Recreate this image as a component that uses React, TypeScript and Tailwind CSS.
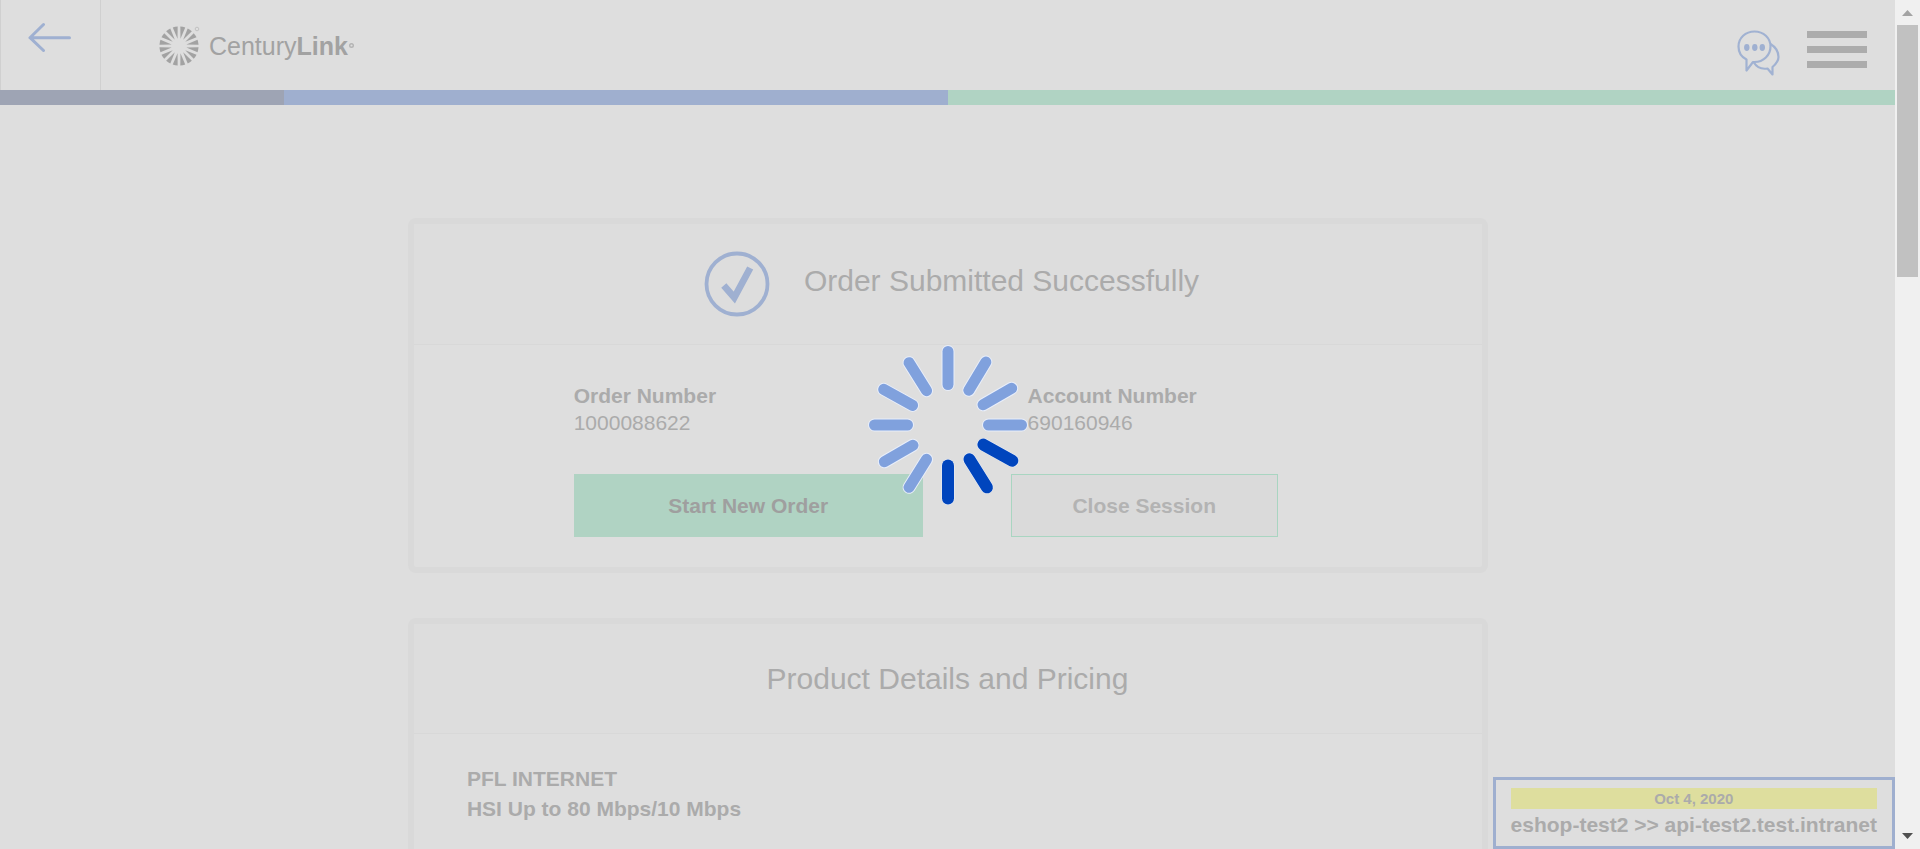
import React from "react";

const WEDGES = Array.from({ length: 16 }, (_, i) => 11.25 + i * 22.5);

const SPOKES = [
  { angle: 0, active: false },
  { angle: 31, active: false },
  { angle: 60, active: false },
  { angle: 90, active: false },
  { angle: 119, active: true },
  { angle: 148, active: true },
  { angle: 180, active: true },
  { angle: 212, active: false },
  { angle: 240, active: false },
  { angle: 270, active: false },
  { angle: 299, active: false },
  { angle: 328, active: false },
];

function Logo() {
  return (
    <a href="#home" aria-label="CenturyLink" className="flex items-center text-[#a2a2a2]">
      <svg width="42" height="42" viewBox="-21 -21 42 42" fill="#a2a2a2">
        {WEDGES.map((a) => (
          <path key={a} d="M0 -7.5 L-2.5 -19.4 A20 20 0 0 1 2.5 -19.4 Z" transform={`rotate(${a})`} />
        ))}
        <circle cx="18" cy="-17" r="1.8" fill="none" stroke="#c2c2c2" strokeWidth="1" />
      </svg>
      <span className="ml-[9px] text-[25px] leading-8">
        Century<b>Link</b>
      </span>
      <svg width="7" height="8" viewBox="0 0 7 8">
        <circle cx="3.5" cy="3.5" r="1.8" fill="none" stroke="#b4b4b4" strokeWidth="1.4" />
      </svg>
    </a>
  );
}

function Header() {
  return (
    <header>
      <div className="flex h-[90px]">
        <button aria-label="Back" className="flex w-[101px] shrink-0 border-x border-[#d0d0d0] pl-[27px] pt-[22px]">
          <svg width="44" height="31" viewBox="0 0 44 31" fill="none" stroke="#9fb0d1" strokeWidth="3" strokeLinecap="round" strokeLinejoin="round">
            <path d="M41.5 15.7H2M15.5 2.5L2 15.7L15.500 28.5" />
          </svg>
        </button>
        <div className="flex flex-1 items-center pl-[57px] pt-px">
          <Logo />
        </div>
        <div className="flex items-start gap-[26px] pr-7 pt-[29px]">
          <button aria-label="Chat">
            <svg width="44" height="48" viewBox="0 0 44 48" fill="none" stroke="#a1b2d2" strokeWidth="2.2" strokeLinejoin="round">
              <path d="M17.5 2.5C26.5 2.5 33.5 9 33.5 17.5S26.5 33 17.5 33H16L9.5 41.5V30.5C4.5 28 1.5 23.5 1.5 17.5C1.5 9 8.5 2.5 17.5 2.5Z" />
              <path d="M33.5 15C38.5 18 41.5 22.5 41.5 28C41.5 32 39 35 35.5 38V45.5L30.5 39.5C24.5 40.5 19.5 38 16.5 33" />
              <g fill="#9fb0d1" stroke="none">
                <ellipse cx="9.8" cy="18.5" rx="2.7" ry="3.4" />
                <ellipse cx="17.8" cy="18.5" rx="2.7" ry="3.4" />
                <ellipse cx="25.3" cy="18.5" rx="2.7" ry="3.4" />
              </g>
            </svg>
          </button>
          <button aria-label="Menu" className="flex w-[60px] flex-col gap-2 pt-0.5">
            <span className="h-[7px] w-full bg-[#acacac]" />
            <span className="h-[7px] w-full bg-[#acacac]" />
            <span className="h-[7px] w-full bg-[#acacac]" />
          </button>
        </div>
      </div>
      <div className="flex h-[15px]">
        <div className="w-[15%] bg-[#9ea4b4]" />
        <div className="w-[35%] bg-[#9fafcf]" />
        <div className="w-1/2 bg-[#b0d3c3]" />
      </div>
    </header>
  );
}

function Card({ children }: { children: React.ReactNode }) {
  return (
    <section className="w-full max-w-[1080px] rounded-lg border-[6px] border-[#d9d9d9]">{children}</section>
  );
}

function Field({ label, value }: { label: string; value: string }) {
  return (
    <div className="w-1/2">
      <dt className="font-bold">{label}</dt>
      <dd>{value}</dd>
    </div>
  );
}

function Spinner() {
  return (
    <div role="status" aria-label="Loading" className="absolute inset-0 flex items-center justify-center">
      <svg width="164" height="164" viewBox="-82 -82 164 164" strokeLinecap="round">
        {SPOKES.map(({ angle, active }) => (
          <g key={angle} transform={`rotate(${angle})`}>
            <line x1="0" y1="-73.5" x2="0" y2="-40.5" stroke="#e8eefa" strokeWidth="13" />
            <line
              x1="0"
              y1="-73.5"
              x2="0"
              y2="-40.5"
              stroke={active ? "#0045bd" : "#80a1dd"}
              strokeWidth={active ? 12 : 11}
            />
          </g>
        ))}
      </svg>
    </div>
  );
}

function EnvironmentBadge() {
  return (
    <div className="absolute bottom-0 right-0 border-[3px] border-[#9fafcf] bg-[#dedede] px-[15px] pb-1.5 pt-2 font-bold">
      <div className="bg-[#dede9e] text-center text-[15px] leading-[21px]">Oct 4, 2020</div>
      <div className="text-[21px] leading-[31px]">eshop-test2 &gt;&gt; api-test2.test.intranet</div>
    </div>
  );
}

function Scrollbar() {
  return (
    <div aria-hidden="true" className="flex w-[25px] shrink-0 flex-col items-center bg-[#f0f0f0]">
      <svg width="25" height="25" viewBox="0 0 25 25" fill="#a3a3a3">
        <path d="M12.5 10L18 16H7Z" />
      </svg>
      <div className="h-[252px] w-[21px] bg-[#c1c1c1]" />
      <svg className="mt-auto" width="25" height="25" viewBox="0 0 25 25" fill="#505050">
        <path d="M12.5 15L18 9H7Z" />
      </svg>
    </div>
  );
}

export default function App() {
  return (
    <div className="flex h-screen bg-[#dedede] font-['Liberation_Sans',Arial,sans-serif] text-[21px] leading-[27px] text-[#ababab]">
      <div className="relative min-w-0 flex-1 overflow-hidden">
        <Header />
        <main className="flex flex-col items-center gap-[45px] pt-[113px]">
          <Card>
            <div className="flex h-[121px] items-center justify-center gap-[34px] border-b border-[#d8d8d8] bg-[#dddddd] pb-1.5 pl-2">
              <svg className="mt-1.5" width="66" height="66" viewBox="0 0 66 66" fill="none" stroke="#9fb0d1">
                <circle cx="33" cy="33" r="30.5" strokeWidth="3.8" />
                <path d="M19.8 34.5L30.3 46.5L46.2 17" strokeWidth="6.8" />
              </svg>
              <h1 className="text-[30px] leading-9">Order Submitted Successfully</h1>
            </div>
            <div className="pb-[30px] pl-[15%] pt-[37px]">
              <dl className="flex">
                <Field label="Order Number" value="1000088622" />
                <Field label="Account Number" value="690160946" />
              </dl>
              <div className="mt-[38px] flex h-[63px] gap-[88px]">
                <button className="w-[349px] bg-[#b0d3c3] font-bold text-[#9f9f9f]">Start New Order</button>
                <button className="w-[267px] border border-[#a9d5c1] bg-[#dadada] font-bold text-[#b3b3b3]">Close Session</button>
              </div>
            </div>
          </Card>
          <Card>
            <h2 className="flex h-[110px] items-center justify-center border-b border-[#d8d8d8] bg-[#dddddd] text-[30px] leading-9">
              Product Details and Pricing
            </h2>
            <div className="px-[5%] py-[30px] font-bold leading-[30px]">
              <p>PFL INTERNET</p>
              <p>HSI Up to 80 Mbps/10 Mbps</p>
            </div>
          </Card>
        </main>
        <EnvironmentBadge />
        <Spinner />
      </div>
      <Scrollbar />
    </div>
  );
}
